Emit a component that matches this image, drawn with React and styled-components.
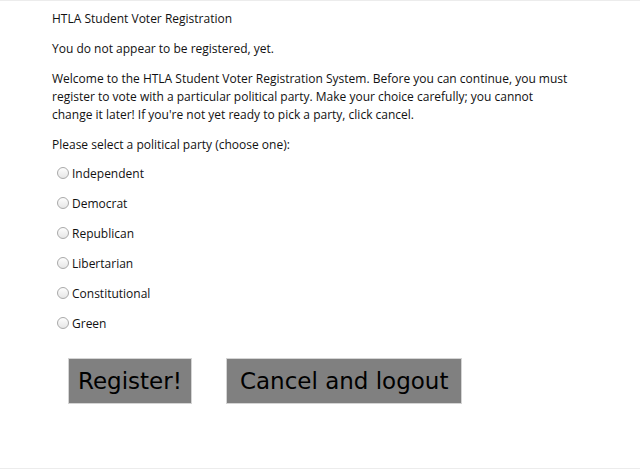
import React, { useState } from 'react';
import styled, { createGlobalStyle } from 'styled-components';

const parties = ['Independent', 'Democrat', 'Republican', 'Libertarian', 'Constitutional', 'Green'];

const GlobalStyle = createGlobalStyle`
	html, body {
		margin: 0;
		padding: 0;
		background: #fff;
	}
	body {
		font-family: "Open Sans", "Liberation Sans", sans-serif;
		color: #111;
	}
`;

const Page = styled.div`
	box-sizing: border-box;
	width: 640px;
	height: 469px;
	border-top: 1px solid #ececec;
	border-bottom: 1px solid #ececec;
	padding: 9px 0 0 52px;
`;

const Text = styled.p`
	margin: 0 0 12px;
	font-size: 12px;
	line-height: 18px;
	width: 520px;
`;

const PartyList = styled.div`
	display: flex;
	flex-direction: column;
	gap: 12px;
	margin-top: -2px;
`;

const PartyRow = styled.label`
	display: flex;
	align-items: center;
	height: 18px;
	font-size: 12px;
	cursor: pointer;
`;

const Radio = styled.span`
	box-sizing: border-box;
	width: 12px;
	height: 12px;
	margin: 0 3px 0 5px;
	border-radius: 50%;
	border: 1px solid #a9a9a9;
	background: ${({ checked }) =>
		checked ? 'radial-gradient(circle, #333 0 3px, #f4f4f4 3.5px)' : 'linear-gradient(#fdfdfd, #e6e6e6)'};
`;

const Actions = styled.div`
	display: flex;
	gap: 34px;
	margin: 26px 0 0 16px;
`;

const Button = styled.button`
	box-sizing: border-box;
	height: 46px;
	padding: 0 ${({ wide }) => (wide ? 13 : 9)}px;
	border: 1px solid #d4d4d4;
	background: #808080;
	color: #000;
	font-family: "DejaVu Sans", "Liberation Sans", sans-serif;
	font-size: 23px;
	cursor: pointer;
`;

export default function App() {
	let [party, setParty] = useState(null);

	return (
		<>
			<GlobalStyle />
			<Page>
				<Text>HTLA Student Voter Registration</Text>
				<Text>You do not appear to be registered, yet.</Text>
				<Text>
					Welcome to the HTLA Student Voter Registration System. Before you can continue, you must
					register to vote with a particular political party. Make your choice carefully; you cannot
					change it later! If you're not yet ready to pick a party, click cancel.
				</Text>
				<Text>Please select a political party (choose one):</Text>
				<PartyList>
					{parties.map((name) => (
						<PartyRow key={name} onClick={() => setParty(name)}>
							<Radio checked={party === name} />
							{name}
						</PartyRow>
					))}
				</PartyList>
				<Actions>
					<Button>Register!</Button>
					<Button wide>Cancel and logout</Button>
				</Actions>
			</Page>
		</>
	);
}
